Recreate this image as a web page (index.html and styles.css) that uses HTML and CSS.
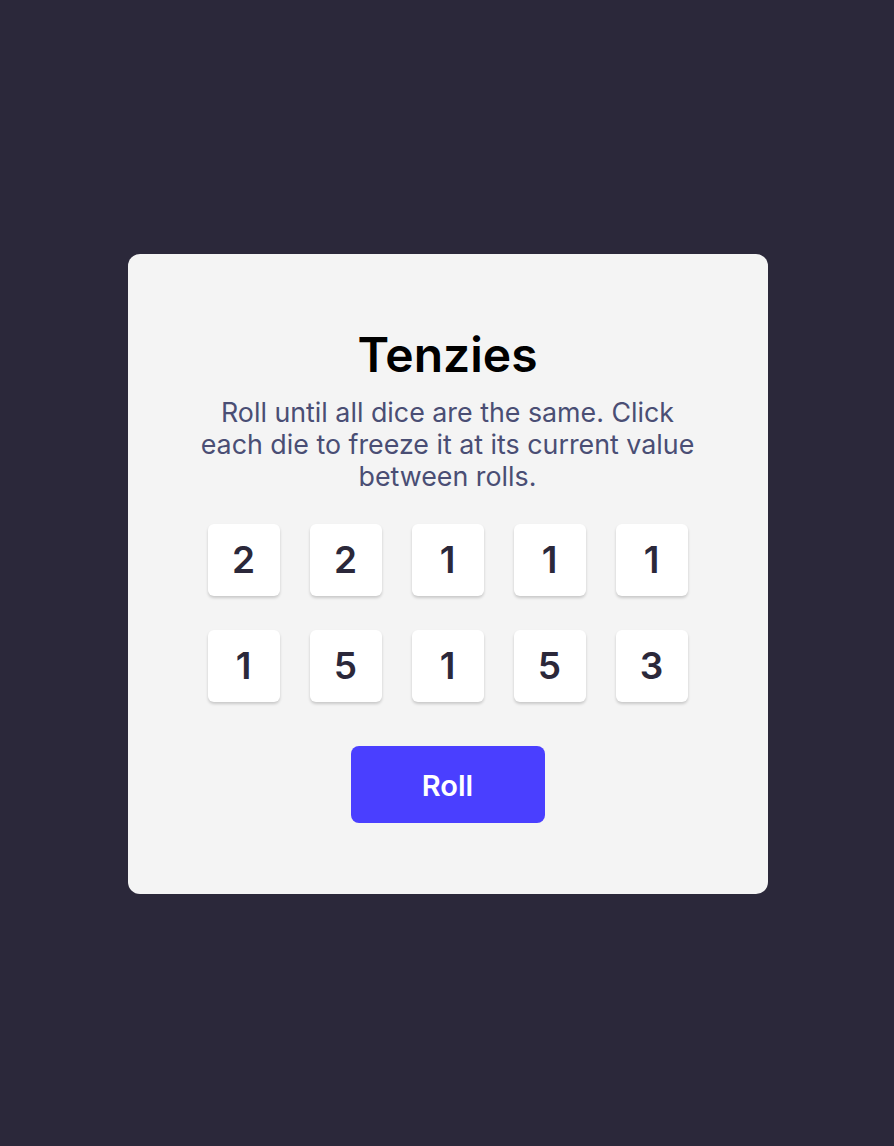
FILE: index.html
```html
<!DOCTYPE html>
<html lang="en">
<head>
<meta charset="utf-8">
<title>Tenzies</title>
<link rel="stylesheet" href="styles.css">
</head>
<body>
<main class="card">
  <h1 class="title">Tenzies</h1>
  <p class="instructions">Roll until all dice are the same. Click each die to freeze it at its current value between rolls.</p>
  <div class="dice">
    <button class="die">2</button>
    <button class="die">2</button>
    <button class="die">1</button>
    <button class="die">1</button>
    <button class="die">1</button>
    <button class="die">1</button>
    <button class="die">5</button>
    <button class="die">1</button>
    <button class="die">5</button>
    <button class="die">3</button>
  </div>
  <button class="roll">Roll</button>
</main>
</body>
</html>
```
FILE: styles.css
```css
html, body {
  margin: 0;
  padding: 0;
}
body {
  background: #2B283A;
  min-height: 100vh;
  box-sizing: border-box;
  padding: 1px 0 0 1px;
  display: flex;
  align-items: center;
  justify-content: center;
  font-family: Inter, "Noto Sans", sans-serif;
}
.card {
  box-sizing: border-box;
  width: 640px;
  height: 640px;
  background: #F4F4F4;
  border-radius: 12px;
  display: flex;
  flex-direction: column;
  align-items: center;
  padding-top: 72px;
}
.title {
  margin: 0;
  font-size: 48px;
  font-weight: 600;
  line-height: 58px;
  color: #000;
}
.instructions {
  margin: 12px 0 0;
  width: 502px;
  text-align: center;
  font-size: 26.8px;
  line-height: 32px;
  color: #4A4E74;
}
.dice {
  margin-top: 32px;
  display: grid;
  grid-template-columns: repeat(5, 72px);
  column-gap: 30px;
  row-gap: 34px;
}
.die {
  width: 72px;
  height: 72px;
  border: none;
  border-radius: 6px;
  background: #FFFFFF;
  box-shadow: 0 2px 3px rgba(0, 0, 0, 0.18);
  font-family: Inter, "Noto Sans", sans-serif;
  font-size: 37px;
  font-weight: 600;
  color: #2B283A;
  padding: 0;
}
.roll {
  margin-top: 44px;
  width: 194px;
  height: 77px;
  border: none;
  border-radius: 8px;
  background: #4A3FFF;
  color: #FFFFFF;
  font-family: Inter, "Noto Sans", sans-serif;
  font-size: 29px;
  font-weight: 600;
  padding: 3px 0 0;
}
```
